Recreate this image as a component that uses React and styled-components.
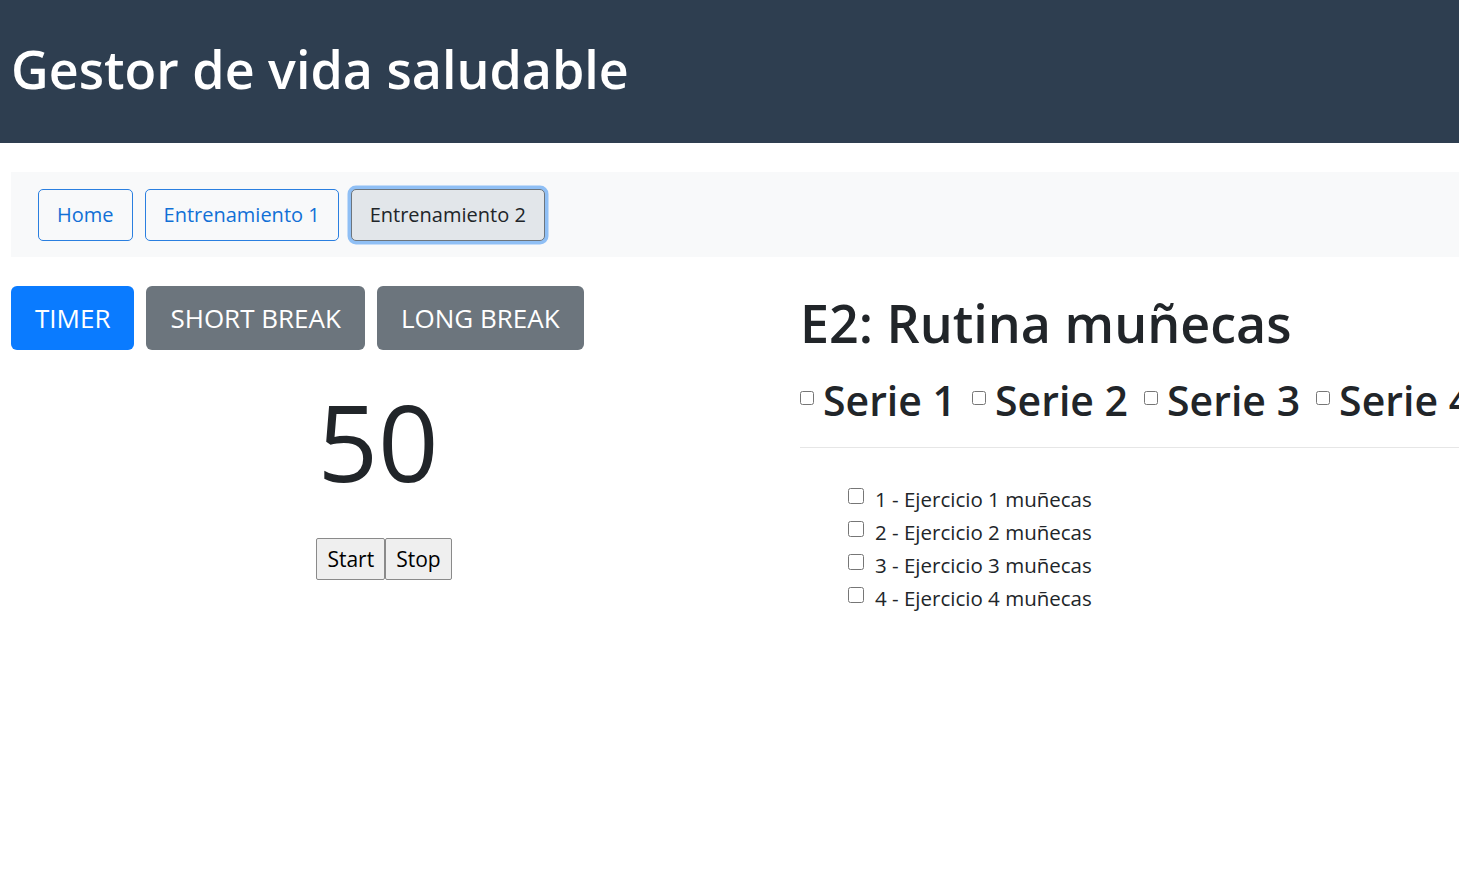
import React, { useState } from "react";
import styled, { createGlobalStyle } from "styled-components";

const GlobalStyle = createGlobalStyle`
  html, body {
    margin: 0;
    padding: 0;
    background: #ffffff;
    overflow: hidden;
  }
  body {
    font-family: "Open Sans", "Noto Sans", sans-serif;
    color: #212529;
  }
  * { box-sizing: border-box; }
`;

const Header = styled.header`
  background-color: #2e3e50;
  height: 143px;
  display: flex;
  align-items: center;
  padding-left: 11px;
  h1 {
    margin: 0 0 6px 0;
    color: #ffffff;
    font-size: 52px;
    font-weight: 600;
  }
`;

const NavBar = styled.nav`
  margin: 29px 0 0 11px;
  height: 85px;
  background-color: #f8f9fa;
  display: flex;
  align-items: center;
  padding-left: 27px;
  gap: 12px;
`;

const NavButton = styled.button`
  height: 52px;
  padding: 0 18px;
  font-family: inherit;
  font-size: 20px;
  border-radius: 5px;
  border: 1.5px solid ${(p) => (p.$active ? "#6c757d" : "#2a7fe0")};
  background: ${(p) => (p.$active ? "#e2e6ea" : "transparent")};
  color: ${(p) => (p.$active ? "#212529" : "#1170d6")};
  box-shadow: ${(p) => (p.$active ? "0 0 0 3.5px #8fbff5" : "none")};
  cursor: pointer;
`;

const Main = styled.main`
  display: grid;
  grid-template-columns: 745px 1fr;
  margin-top: 29px;
`;

const LeftCol = styled.section`
  padding-left: 11px;
  display: flex;
  flex-direction: column;
`;

const Tabs = styled.div`
  display: flex;
  gap: 12px;
`;

const TabButton = styled.button`
  height: 64px;
  padding: 0 24px;
  border: none;
  border-radius: 6px;
  font-family: inherit;
  font-size: 26px;
  font-weight: 400;
  color: #ffffff;
  background-color: ${(p) => (p.$active ? "#0a7bff" : "#6c757d")};
  cursor: pointer;
`;

const Counter = styled.div`
  text-align: center;
  font-size: 106px;
  line-height: 1;
  margin-top: 38px;
  color: #212529;
`;

const Controls = styled.div`
  display: flex;
  justify-content: center;
  margin-top: 44px;
  padding-left: 12px;
`;

const PlainButton = styled.button`
  height: 42px;
  padding: 0 10px;
  font-family: inherit;
  font-size: 21px;
  color: #000000;
  background-color: #efefef;
  border: 1px solid #8a8a8a;
  border-radius: 2px;
  cursor: pointer;
`;

const RightCol = styled.section`
  padding-left: 55px;
  min-width: 0;
`;

const Title = styled.h2`
  margin: 6px 0 0 0;
  font-size: 52px;
  font-weight: 600;
  line-height: 1.2;
`;

const SeriesRow = styled.div`
  display: flex;
  white-space: nowrap;
  gap: 16px;
  margin-top: 22px;
  padding-bottom: 21px;
  border-bottom: 1.5px solid #e6e6e6;
`;

const Serie = styled.label`
  display: flex;
  align-items: center;
  gap: 9px;
  font-size: 41px;
  font-weight: 600;
  line-height: 1.2;
  input {
    width: 14px;
    height: 14px;
    margin: 0;
    position: relative;
    top: -3px;
  }
`;

const ExerciseList = styled.ul`
  list-style: none;
  margin: 35px 0 0 0;
  padding-left: 48px;
`;

const Exercise = styled.li`
  display: flex;
  align-items: center;
  gap: 11px;
  height: 33px;
  font-size: 20.5px;
  input {
    width: 16px;
    height: 16px;
    margin: 0;
    position: relative;
    top: -3px;
  }
`;

export default function App() {
  const [tab, setTab] = useState(0);
  const tabs = ["TIMER", "SHORT BREAK", "LONG BREAK"];
  const series = [1, 2, 3, 4];
  const ejercicios = [1, 2, 3, 4];

  return (
    <>
      <GlobalStyle />
      <Header>
        <h1>Gestor de vida saludable</h1>
      </Header>
      <NavBar>
        <NavButton>Home</NavButton>
        <NavButton>Entrenamiento 1</NavButton>
        <NavButton $active>Entrenamiento 2</NavButton>
      </NavBar>
      <Main>
        <LeftCol>
          <Tabs>
            {tabs.map((t, i) => (
              <TabButton key={t} $active={tab === i} onClick={() => setTab(i)}>
                {t}
              </TabButton>
            ))}
          </Tabs>
          <Counter>50</Counter>
          <Controls>
            <PlainButton>Start</PlainButton>
            <PlainButton>Stop</PlainButton>
          </Controls>
        </LeftCol>
        <RightCol>
          <Title>E2: Rutina muñecas</Title>
          <SeriesRow>
            {series.map((s) => (
              <Serie key={s}>
                <input type="checkbox" />
                Serie {s}
              </Serie>
            ))}
          </SeriesRow>
          <ExerciseList>
            {ejercicios.map((e) => (
              <Exercise key={e}>
                <input type="checkbox" />
                {e} - Ejercicio {e} muñecas
              </Exercise>
            ))}
          </ExerciseList>
        </RightCol>
      </Main>
    </>
  );
}
